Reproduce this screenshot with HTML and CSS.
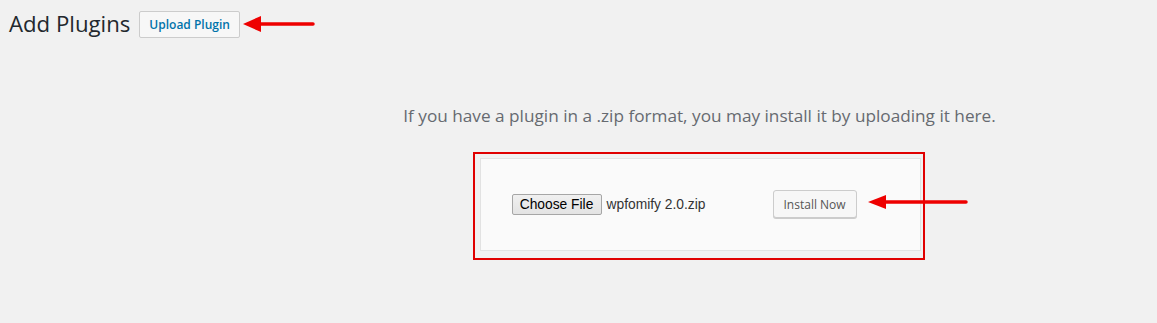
FILE: index.html
```html
<!DOCTYPE html>
<html lang="en">
<head>
    <meta charset="UTF-8">
    <meta name="viewport" content="width=device-width, initial-scale=1.0">
    <title>Add Plugins</title>
    <link rel="stylesheet" href="styles.css">
</head>
<body>
    <div class="wrap">
        <div class="title-row">
            <h1>Add Plugins</h1>
            <a class="page-title-action" href="#">Upload Plugin</a>
            <svg class="arrow arrow-top" width="72" height="16" viewBox="0 0 72 16">
                <line x1="14" y1="8" x2="70" y2="8" stroke="#ee0000" stroke-width="3.5" stroke-linecap="round"/>
                <polygon points="0,8 18,0 18,16" fill="#ee0000"/>
            </svg>
        </div>
        <div class="upload-plugin">
            <p class="install-help">If you have a plugin in a .zip format, you may install it by uploading it here.</p>
            <div class="mark">
                <form class="upload-form">
                    <span class="file-input">
                        <span class="file-button">Choose File</span>
                        <span class="file-name">wpfomify 2.0.zip</span>
                    </span>
                    <button type="button" class="button">Install Now</button>
                </form>
                <svg class="arrow arrow-form" width="100" height="16" viewBox="0 0 100 16">
                    <line x1="14" y1="8" x2="98" y2="8" stroke="#ee0000" stroke-width="3.5" stroke-linecap="round"/>
                    <polygon points="0,8 18,1 18,15" fill="#ee0000"/>
                </svg>
            </div>
        </div>
    </div>
</body>
</html>
```

FILE: styles.css
```css
body {
    margin: 0;
    background: #f1f1f1;
    font-family: "Open Sans", "Noto Sans", sans-serif;
    color: #444;
}
.wrap {
    padding: 9px 0 0 9px;
}
.title-row {
    display: flex;
    align-items: center;
    height: 30px;
}
.title-row h1 {
    margin: 0;
    font-size: 22.2px;
    font-weight: 400;
    line-height: 30px;
    color: #23282d;
}
.page-title-action {
    margin-left: 9px;
    padding: 0 9px;
    height: 25px;
    line-height: 25px;
    border: 1px solid #cccccc;
    border-radius: 2px;
    background: #f7f7f7;
    color: #0073aa;
    font-size: 12px;
    font-weight: 600;
    text-decoration: none;
}
.arrow-top {
    margin-left: 3px;
}
.upload-plugin {
    margin: 65px 0 0 233px;
    text-align: center;
}
.install-help {
    margin: 0 0 24px;
    font-size: 17.2px;
    line-height: 24px;
    color: #666a70;
}
.mark {
    position: relative;
    display: inline-block;
    margin-right: 2px;
    padding: 4px 2px 7px 5px;
    border: 2px solid #e00000;
}
.upload-form {
    display: flex;
    align-items: center;
    width: 378px;
    margin: 0;
    padding: 31px 30px 32px 31px;
    border: 1px solid #e2e2e2;
    background: #fafafa;
    text-align: left;
}
.file-input {
    display: flex;
    align-items: center;
    width: 257px;
    font-family: "Liberation Sans", Arial, sans-serif;
    font-size: 13.8px;
    color: #333;
}
.file-button {
    box-sizing: border-box;
    width: 90px;
    height: 21px;
    line-height: 19px;
    text-align: center;
    color: #000;
    border: 1px solid #a6a6a6;
    border-radius: 2px;
    background: linear-gradient(#f0f0f0, #e3e3e3);
}
.file-name {
    margin-left: 5px;
}
.button {
    margin-left: 4px;
    height: 28px;
    padding: 0 10px;
    border: 1px solid #cccccc;
    border-radius: 3px;
    background: #f7f7f7;
    box-shadow: 0 1px 0 #cccccc;
    color: #555555;
    font-family: "Open Sans", "Noto Sans", sans-serif;
    font-size: 12px;
}
.arrow-form {
    position: absolute;
    left: 393px;
    top: 40px;
}
```
